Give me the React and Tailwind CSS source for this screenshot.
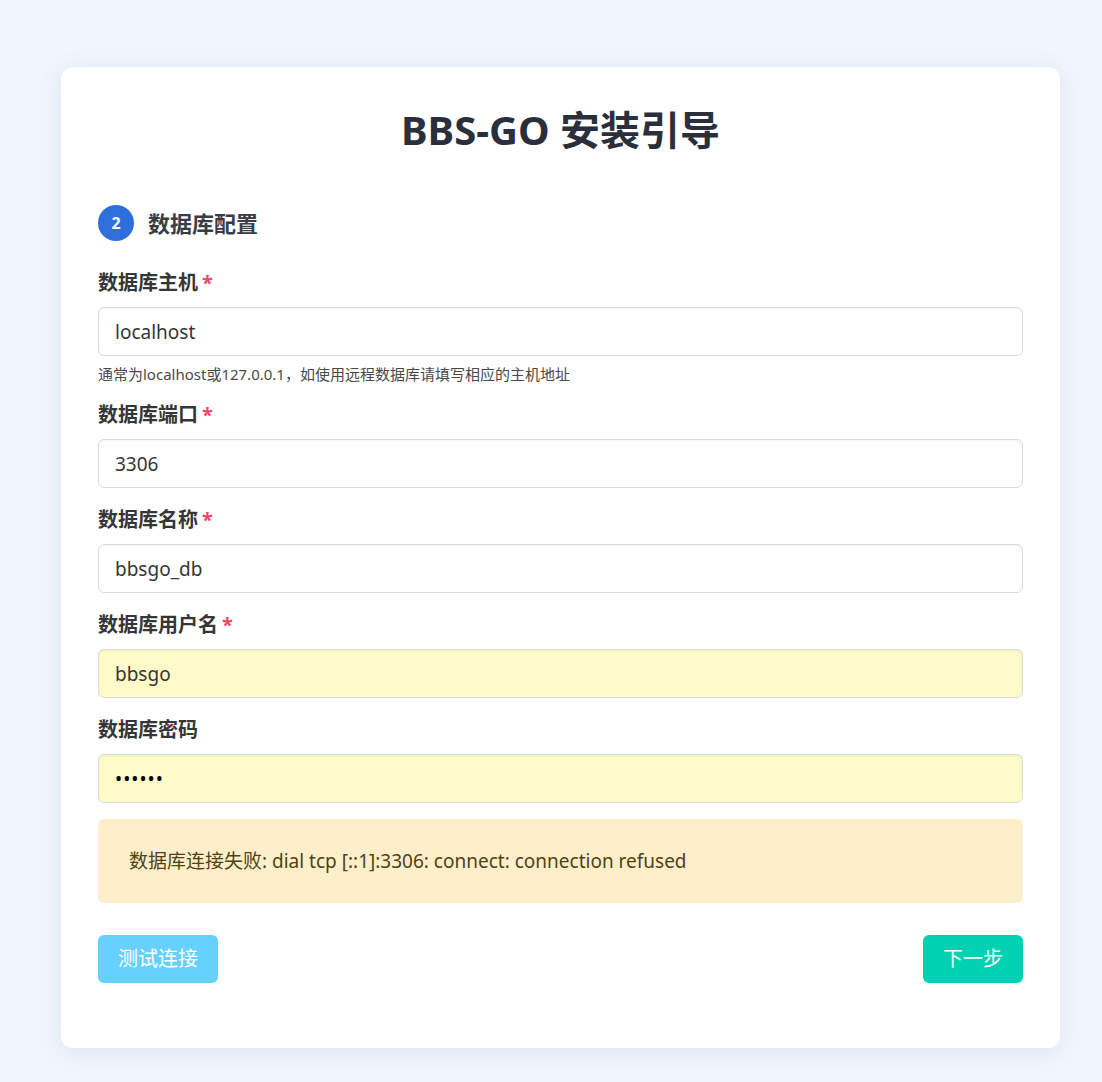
import React, { useState } from 'react';

const font = { fontFamily: '"Noto Sans", "Noto Sans CJK SC", sans-serif' };

const Field = ({ label, required, value, type = 'text', filled, help, first }) => (
  <div className={first ? 'mt-[30px]' : 'mt-5'}>
    <label className="block text-[20px] leading-6 font-bold text-[#363636]">
      {label}
      {required && <span className="ml-1 text-[#f14668]">*</span>}
    </label>
    <input
      type={type}
      defaultValue={value}
      className={`mt-3 block w-full h-[49px] rounded-md border border-[#dbdbdb] px-4 text-[19px] text-[#363636] shadow-[inset_0_1px_2px_rgba(10,10,10,0.05)] outline-none ${
        filled ? 'bg-[#fefbc9]' : 'bg-white'
      } ${type === 'password' ? 'text-black tracking-[1px]' : ''}`}
      style={font}
    />
    {help && <p className="mt-[9px] text-[15px] leading-[18px] text-[#4a4a4a]">{help}</p>}
  </div>
);

const App = () => {
  const [testing, setTesting] = useState(false);

  return (
    <div className="min-h-[1082px] bg-[#f1f6fd] pt-[67px] pl-[61px] pb-9" style={font}>
      <div className="w-[999px] rounded-xl bg-white px-[37px] pt-10 pb-[65px] shadow-[0_4px_24px_rgba(90,110,150,0.12)]">
        <h1 className="text-center text-[40px] leading-[45px] font-bold text-[#2b2f3b]">BBS-GO 安装引导</h1>

        <div className="mt-[53px] flex items-center gap-[14px]">
          <div className="flex h-9 w-9 items-center justify-center rounded-full bg-[#2f6fdc] text-[16px] font-bold text-white">
            2
          </div>
          <h2 className="text-[22px] font-semibold text-[#3a3d44]">数据库配置</h2>
        </div>

        <Field
          first
          label="数据库主机"
          required
          value="localhost"
          help="通常为localhost或127.0.0.1，如使用远程数据库请填写相应的主机地址"
        />
        <Field label="数据库端口" required value="3306" />
        <Field label="数据库名称" required value="bbsgo_db" />
        <Field label="数据库用户名" required value="bbsgo" filled />
        <Field label="数据库密码" value="123456" type="password" filled />

        <div className="mt-4 flex h-[84px] items-center rounded-md bg-[#feefca] pl-[31px] text-[19px] text-[#4f4214]">
          数据库连接失败: dial tcp [::1]:3306: connect: connection refused
        </div>

        <div className="mt-8 flex items-center justify-between">
          <button
            onClick={() => setTesting(!testing)}
            className="h-12 rounded-md bg-[#66d1ff] px-5 text-[20px] text-white"
          >
            测试连接
          </button>
          <button className="h-12 rounded-md bg-[#00d1b2] px-5 text-[20px] text-white">下一步</button>
        </div>
      </div>
    </div>
  );
};

export default App;
